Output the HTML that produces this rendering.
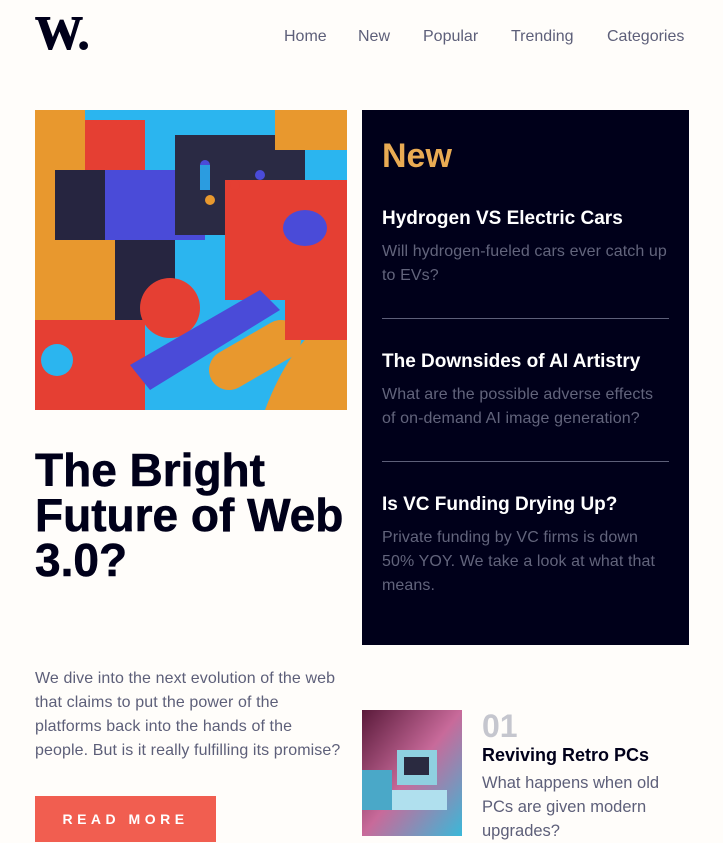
<!DOCTYPE html>
<html><head><meta charset="utf-8"><style>
*{margin:0;padding:0;box-sizing:border-box}
body{width:723px;height:836px;overflow:hidden;background:#fffdfa;font-family:"Liberation Sans",sans-serif;position:relative}
.abs{position:absolute}
.logo{left:35px;top:10px;font-family:"Liberation Serif",serif;font-weight:900;font-size:48px;color:#00001a;letter-spacing:-1px;line-height:48px;-webkit-text-stroke:1px #00001a}
.nav{top:28px;font-size:16px;color:#5d5f79}
.panel{left:362px;top:110px;width:327px;height:535px;background:#00001a}
.new{left:20px;top:27px;color:#e9ab53;font-size:34px;font-weight:bold}
.it h3{color:#fff;font-size:19px;font-weight:bold;margin-bottom:10px}
.it p{color:#62647c;font-size:16px;letter-spacing:0.1px;line-height:24px;white-space:nowrap}
.it{left:20px;width:300px}
.hr{left:20px;width:287px;height:1px;background:#5d5f79}
h1{left:35px;top:448px;font-size:46px;line-height:45px;color:#00001a;font-weight:900;letter-spacing:0;-webkit-text-stroke:0.6px #00001a}
.para{left:35px;top:667px;width:330px;font-size:16px;letter-spacing:0.1px;line-height:24px;color:#5d5f79;white-space:nowrap}
.btn{left:35px;top:796px;width:181px;height:46px;background:#f15e50;color:#fff;font-weight:bold;font-size:14px;letter-spacing:4.5px;text-align:center;line-height:46px}
</style></head><body>
<div class="abs logo">W.</div>
<div class="abs nav" style="left:284px">Home</div>
<div class="abs nav" style="left:358px">New</div>
<div class="abs nav" style="left:423px">Popular</div>
<div class="abs nav" style="left:511px">Trending</div>
<div class="abs nav" style="left:607px">Categories</div>

<svg class="abs" style="left:35px;top:110px" width="312" height="300" viewBox="0 0 312 300">
<rect width="312" height="300" fill="#2bb5ef"/>
<rect x="0" y="0" width="50" height="130" fill="#e8982e"/>
<rect x="50" y="10" width="60" height="50" fill="#e53f33"/>
<rect x="20" y="60" width="120" height="150" fill="#262540"/>
<rect x="70" y="60" width="100" height="70" fill="#4a4bd8"/>
<rect x="140" y="25" width="130" height="100" fill="#2a2a44"/>
<rect x="190" y="70" width="122" height="120" fill="#e53f33"/>
<ellipse cx="270" cy="118" rx="22" ry="18" fill="#4a4bd8"/>
<rect x="0" y="130" width="80" height="100" fill="#e8982e"/>
<rect x="0" y="210" width="110" height="90" fill="#e53f33"/>
<circle cx="135" cy="198" r="30" fill="#e53f33"/>
<polygon points="95,255 225,180 245,200 115,280" fill="#4a4bd8"/>
<rect x="170" y="225" width="100" height="40" rx="20" fill="#e8982e" transform="rotate(-30 220 245)"/>
<rect x="240" y="0" width="72" height="40" fill="#e8982e"/>
<path d="M230 300 Q260 220 312 200 L312 300Z" fill="#e8982e"/>
<rect x="250" y="190" width="62" height="40" fill="#e53f33"/>
<circle cx="22" cy="250" r="16" fill="#2bb5ef"/>
<circle cx="170" cy="55" r="5" fill="#4a4bd8"/><circle cx="200" cy="75" r="5" fill="#e53f33"/><circle cx="175" cy="90" r="5" fill="#e8982e"/><circle cx="225" cy="65" r="5" fill="#4a4bd8"/>
<rect x="165" y="55" width="10" height="25" fill="#2b9ce0"/>
</svg>

<div class="abs panel">
<div class="abs new">New</div>
<div class="abs it" style="top:98px"><h3>Hydrogen VS Electric Cars</h3><p>Will hydrogen-fueled cars ever catch up<br>to EVs?</p></div>
<div class="abs hr" style="top:208px"></div>
<div class="abs it" style="top:241px"><h3>The Downsides of AI Artistry</h3><p>What are the possible adverse effects<br>of on-demand AI image generation?</p></div>
<div class="abs hr" style="top:351px"></div>
<div class="abs it" style="top:384px"><h3>Is VC Funding Drying Up?</h3><p>Private funding by VC firms is down<br>50% YOY. We take a look at what that<br>means.</p></div>
</div>

<h1 class="abs">The Bright<br>Future of Web<br>3.0?</h1>
<p class="abs para">We dive into the next evolution of the web<br>that claims to put the power of the<br>platforms back into the hands of the<br>people. But is it really fulfilling its promise?</p>
<div class="abs btn">READ MORE</div>

<svg class="abs" style="left:362px;top:710px" width="100" height="126">
<defs><linearGradient id="g" x1="0" y1="0" x2="1" y2="1"><stop offset="0" stop-color="#5a1a3a"/><stop offset="0.5" stop-color="#c86a9a"/><stop offset="1" stop-color="#3ab8d8"/></linearGradient></defs>
<rect width="100" height="126" fill="url(#g)"/>
<rect x="35" y="40" width="40" height="35" fill="#8fd0e0"/><rect x="42" y="47" width="25" height="18" fill="#2a2a40"/>
<rect x="30" y="80" width="55" height="20" fill="#b0e0ee"/>
<rect x="0" y="60" width="30" height="40" fill="#4aa8c8"/>
</svg>
<div class="abs" style="left:482px;top:708px;font-size:32px;font-weight:bold;color:#c5c6ce">01</div>
<div class="abs" style="left:482px;top:745px;font-size:18px;font-weight:bold;color:#00001a">Reviving Retro PCs</div>
<div class="abs" style="left:482px;top:771px;width:220px;font-size:16.5px;line-height:24px;color:#5d5f79;white-space:nowrap">What happens when old<br>PCs are given modern<br>upgrades?</div>
</body></html>
